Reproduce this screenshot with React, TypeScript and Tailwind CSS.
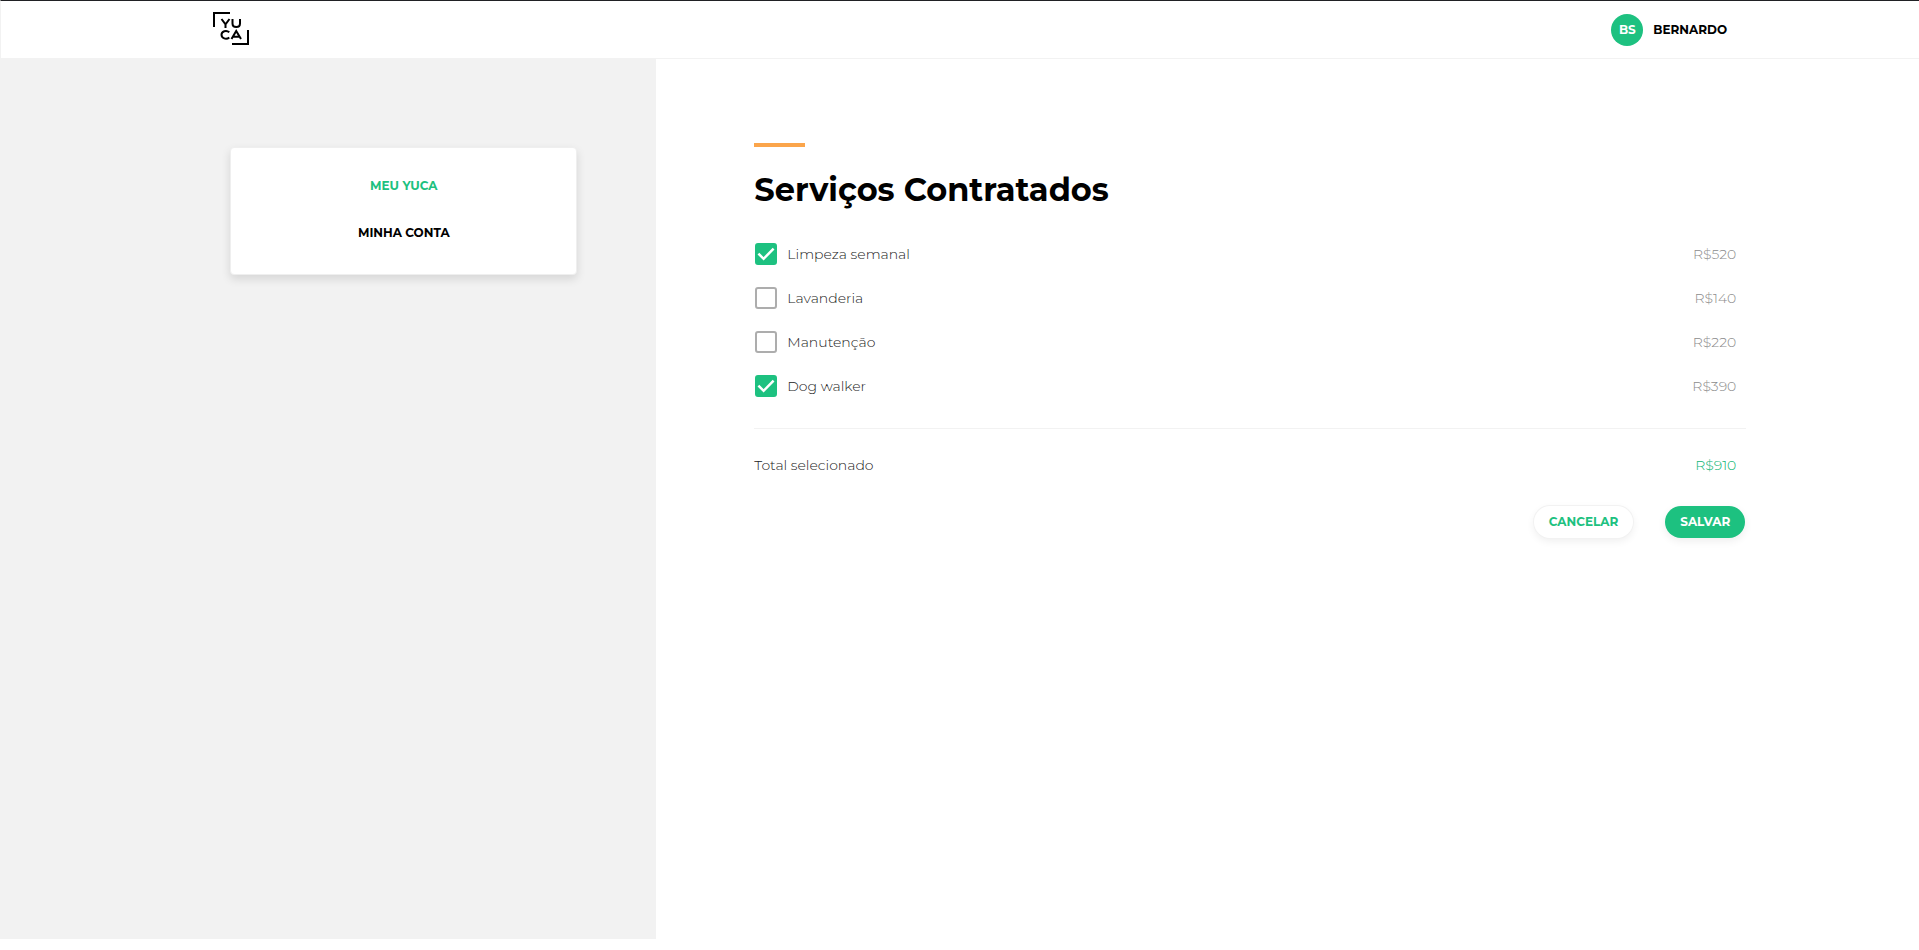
import { useState } from "react";

type Service = { id: string; name: string; price: number };

const services: Service[] = [
  { id: "limpeza", name: "Limpeza semanal", price: 520 },
  { id: "lavanderia", name: "Lavanderia", price: 140 },
  { id: "manutencao", name: "Manutenção", price: 220 },
  { id: "dog-walker", name: "Dog walker", price: 390 },
];

const initialSelection = ["limpeza", "dog-walker"];

function Logo() {
  return (
    <svg width="36" height="33" viewBox="0 0 36 33" fill="none" stroke="#000" role="img" aria-label="Yuca">
      <path d="M17 1H1V15" strokeWidth="2" />
      <path d="M19 32H35V18" strokeWidth="2" />
      <g strokeWidth="2">
        <path d="M8.5 7L12.5 12.3L16.5 7M12.5 12V16" />
        <path d="M19.5 7V11.5C19.5 16.2 27 16.2 27 11.5V7" />
        <path d="M16.3 20.2C13.2 17.6 8.5 19.3 8.5 22.8C8.5 26.3 13.2 28 16.3 25.4" />
        <path d="M18.5 27L23.2 19L28 27M20 24.8H26.5" />
      </g>
    </svg>
  );
}

function Header() {
  return (
    <header className="flex h-[59px] items-center justify-between border-t border-b border-l border-t-[#202124] border-b-[#f2f2f2] border-l-[#f2f2f2] bg-white pr-[10%] pl-[11%]">
      <a href="#inicio" className="mb-0.5 ml-px">
        <Logo />
      </a>
      <a href="#perfil" className="flex items-center gap-[10px] pt-px text-xs font-bold">
        <span className="flex size-8 items-center justify-center rounded-full bg-[#1dc180] text-white">BS</span>
        BERNARDO
      </a>
    </header>
  );
}

function Sidebar() {
  return (
    <aside className="w-[34.2%] bg-[#f2f2f2] pt-[88px] pr-[79px] pl-[12%]">
      <nav className="flex flex-col items-center gap-[27px] rounded-sm border border-[#efefef] bg-white px-4 pt-7 pb-[31px] text-xs leading-5 font-bold shadow-[0_4px_10px_rgba(0,0,0,0.12)]">
        <a href="#meu-yuca" aria-current="page" className="text-[#1dc180]">
          MEU YUCA
        </a>
        <a href="#minha-conta">MINHA CONTA</a>
      </nav>
    </aside>
  );
}

type RowProps = { service: Service; checked: boolean; onToggle: () => void };

function ServiceRow({ service, checked, onToggle }: RowProps) {
  return (
    <li className="flex h-11 items-center justify-between pr-[10px] pl-px">
      <label htmlFor={service.id} className="flex items-center gap-[10px] text-[#222]">
        <span className="relative size-[22px]">
          <input
            id={service.id}
            type="checkbox"
            checked={checked}
            onChange={onToggle}
            className="peer block size-[22px] appearance-none rounded-[3px] border-2 border-[#adadad] bg-white checked:border-[#1dc180] checked:bg-[#1dc180]"
          />
          <svg
            viewBox="0 0 22 22"
            className="pointer-events-none absolute inset-0 hidden size-[22px] peer-checked:block"
            fill="none"
            stroke="#fff"
            strokeWidth="2.5"
            aria-hidden="true"
          >
            <path d="M3.4 10.6L8.6 15.8L18.6 5.6" />
          </svg>
        </span>
        {service.name}
      </label>
      <span className="text-[#8c8c8c]">R${service.price}</span>
    </li>
  );
}

export default function App() {
  const [selected, setSelected] = useState<string[]>(initialSelection);

  const toggle = (id: string) =>
    setSelected((current) => (current.includes(id) ? current.filter((item) => item !== id) : [...current, id]));

  const total = services.filter((s) => selected.includes(s.id)).reduce((sum, s) => sum + s.price, 0);

  return (
    <div className="flex min-h-screen flex-col bg-white pb-[11px] font-['Montserrat','Inter',sans-serif] text-black">
      <Header />
      <div className="flex grow">
        <Sidebar />
        <main className="grow pt-21 pr-[9%] pl-[98px]">
          <div className="h-1 w-[51px] bg-[#fba54b]" />
          <h1 className="mt-[23px] text-[32px] leading-10 font-bold">Serviços Contratados</h1>
          <ul className="mt-[22px] text-sm font-light">
            {services.map((service) => (
              <ServiceRow
                key={service.id}
                service={service}
                checked={selected.includes(service.id)}
                onToggle={() => toggle(service.id)}
              />
            ))}
          </ul>
          <div className="mt-5 flex justify-between border-t border-[#f2f2f2] pt-6 pr-[10px] text-sm leading-6 font-light">
            <span className="text-[#222]">Total selecionado</span>
            <span className="text-[#10b574]">R${total}</span>
          </div>
          <div className="mt-[29px] flex justify-end gap-8 pr-px text-xs font-bold">
            <button
              type="button"
              className="h-8 rounded-full bg-white px-[15px] text-[#1dc180] shadow-[0_0_0_1px_#f2f2f2,0_3px_8px_rgba(0,0,0,0.07)]"
            >
              CANCELAR
            </button>
            <button
              type="button"
              className="h-8 rounded-full bg-[#1dc180] px-[15px] text-white shadow-[0_3px_8px_rgba(0,0,0,0.07)]"
            >
              SALVAR
            </button>
          </div>
        </main>
      </div>
    </div>
  );
}
